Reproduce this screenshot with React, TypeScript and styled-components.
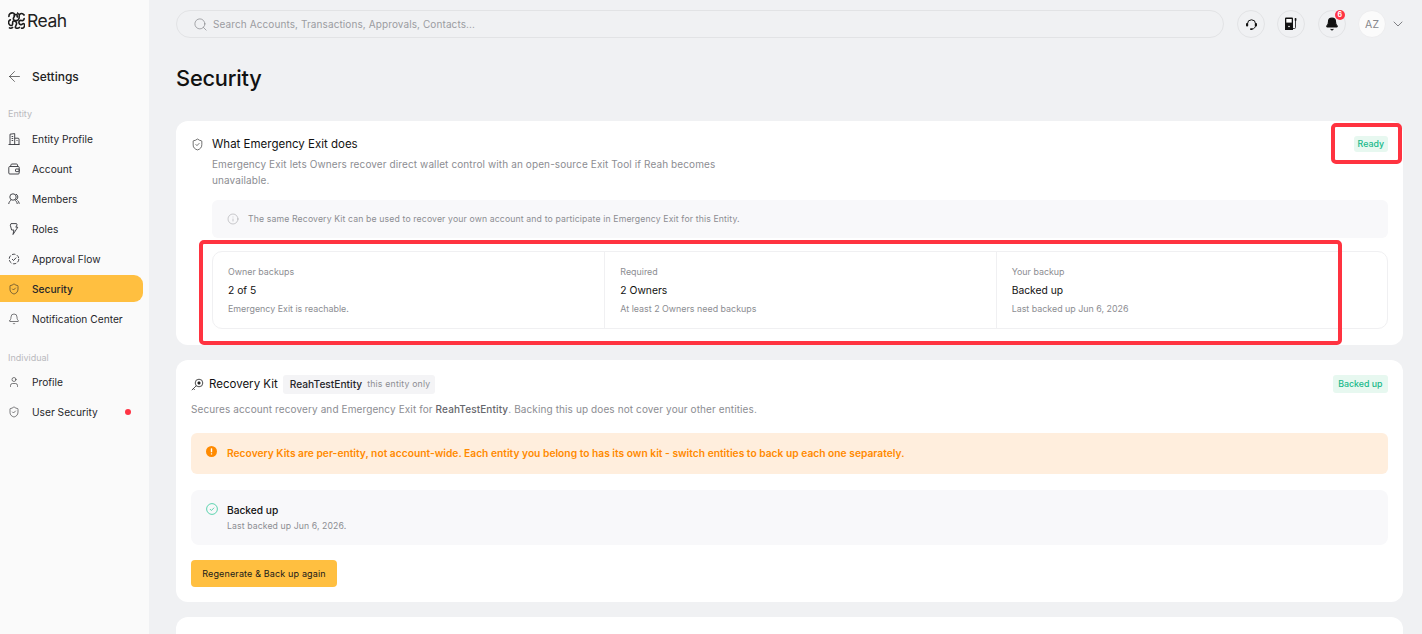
import styled, { createGlobalStyle } from 'styled-components';
import { ArrowLeft, Bell, ChevronDown, Info, Search, ShieldCheck, User } from 'lucide-react';

const GlobalStyle = createGlobalStyle`
  html, body {
    margin: 0;
    padding: 0;
    height: 634px;
    overflow: hidden;
    background: #f0f1f3;
    font-family: Inter, "Liberation Sans", sans-serif;
    color: #111;
  }
  * { box-sizing: border-box; }
`

const Page = styled.div`
  position: relative;
  display: flex;
  width: 1422px;
  height: 634px;
  overflow: hidden;
`

const Sidebar = styled.aside`
  flex: 0 0 149px;
  background: #fafafa;
  display: flex;
  flex-direction: column;
  padding-right: 6px;
`

const Logo = styled.div`
  display: flex;
  align-items: center;
  gap: 2px;
  height: 40px;
  padding-left: 8px;
  font-size: 17.5px;
  letter-spacing: -0.5px;
  color: #222;
`

const BackRow = styled.div`
  display: flex;
  align-items: center;
  gap: 9px;
  margin-top: 15px;
  height: 42px;
  padding-left: 6px;
  font-size: 12px;
  font-weight: 500;
  color: #222;
`

const SectionLabel = styled.div<{ $gap: number }>`
  margin-top: ${props => props.$gap}px;
  height: 14px;
  line-height: 14px;
  padding-left: 8px;
  font-size: 9px;
  color: #b9b9bd;
`

const NavList = styled.nav<{ $top: number }>`
  display: flex;
  flex-direction: column;
  margin-top: ${props => props.$top}px;
`

const NavItem = styled.div<{ $active?: boolean }>`
  display: flex;
  align-items: center;
  gap: 12px;
  height: 27px;
  margin-bottom: 3px;
  padding: 0 12px 0 8px;
  border-radius: ${props => props.$active ? '0 9px 9px 0' : '0'};
  background: ${props => props.$active ? '#ffbf40' : 'transparent'};
  font-size: 10.2px;
  font-weight: ${props => props.$active ? 500 : 400};
  color: #26262a;
  white-space: nowrap;

  svg {
    flex: 0 0 12px;
  }
`

const RedDot = styled.span`
  width: 6px;
  height: 6px;
  margin-left: auto;
  border-radius: 50%;
  background: #ff3344;
`

const Main = styled.main`
  flex: 1;
  display: flex;
  flex-direction: column;
  padding: 10px 19px 0 27px;
  min-width: 0;
`

const TopBar = styled.header`
  display: flex;
  align-items: center;
  height: 28px;
`

const SearchBar = styled.div`
  flex: 0 0 1048px;
  height: 28px;
  display: flex;
  align-items: center;
  gap: 5px;
  padding-left: 16px;
  border: 1px solid #e2e3e5;
  border-radius: 14px;
  font-size: 10px;
  letter-spacing: 0.1px;
  color: #9b9ca1;
`

const TopActions = styled.div`
  display: flex;
  align-items: center;
  gap: 12.4px;
  margin-left: 13px;
`

const RoundButton = styled.div`
  position: relative;
  width: 28px;
  height: 28px;
  display: flex;
  align-items: center;
  justify-content: center;
  border: 1px solid #e2e3e5;
  border-radius: 50%;
`

const Counter = styled.span`
  position: absolute;
  top: -1px;
  right: 0;
  width: 10px;
  height: 10px;
  border-radius: 50%;
  background: #ff3344;
  color: #fff;
  font-size: 7px;
  font-weight: 700;
  line-height: 10px;
  text-align: center;
`

const Avatar = styled.div`
  width: 28px;
  height: 28px;
  display: flex;
  align-items: center;
  justify-content: center;
  border-radius: 50%;
  background: #fbfbfb;
  border: 1px solid #ededef;
  font-size: 10.5px;
  letter-spacing: 0.3px;
  color: #85868b;
`

const AccountMenu = styled.div`
  display: flex;
  align-items: center;
  gap: 4px;
  color: #55565a;
`

const Title = styled.h1`
  margin: 25px 0 28px;
  height: 30px;
  line-height: 30px;
  font-size: 21.8px;
  font-weight: 500;
  letter-spacing: -0.2px;
  color: #111;
`

const Cards = styled.div`
  display: flex;
  flex-direction: column;
  gap: 15px;
`

const Card = styled.section<{ $height: number; $top: number }>`
  height: ${props => props.$height}px;
  flex: 0 0 ${props => props.$height}px;
  padding: ${props => props.$top}px 15px 0;
  background: #fff;
  border-radius: 12px;
`

const CardHead = styled.div<{ $gap: number }>`
  display: flex;
  align-items: center;
  gap: ${props => props.$gap}px;
  height: 18px;
`

const CardTitle = styled.h2`
  margin: 0;
  font-size: 11.5px;
  font-weight: 400;
  color: #111;
  white-space: nowrap;
`

const StatusBadge = styled.span<{ $tall?: boolean }>`
  margin-left: auto;
  height: ${props => props.$tall ? 18 : 16}px;
  line-height: ${props => props.$tall ? 18 : 16}px;
  padding: 0 ${props => props.$tall ? 5.5 : 4}px;
  border-radius: 3px;
  background: #e7f8f0;
  color: #16b88a;
  font-size: 8.8px;
  font-weight: 500;
`

const ExitDescription = styled.p`
  width: 530px;
  margin: 3px 0 0 21px;
  font-size: 10px;
  line-height: 16px;
  letter-spacing: 0.11px;
  color: #8c8d92;
`

const Note = styled.div`
  display: flex;
  align-items: center;
  gap: 9px;
  height: 38px;
  margin: 12px 0 0 21px;
  padding-left: 15px;
  border-radius: 6px;
  background: #f8f8fa;
  font-size: 8.7px;
  letter-spacing: 0.13px;
  color: #8c8d92;
`

const StatGrid = styled.div`
  display: grid;
  grid-template-columns: repeat(3, 1fr);
  height: 78px;
  margin: 13px 0 0 21px;
  border: 1px solid #f0f0f2;
  border-radius: 10px;
`

const StatCell = styled.div`
  padding: 14px 15px 0;
  & + & {
    border-left: 1px solid #f0f0f2;
  }
`

const StatLabel = styled.div`
  font-size: 8.9px;
  line-height: 12px;
  color: #8c8d92;
`

const StatValue = styled.div`
  margin-top: 5px;
  font-size: 10.3px;
  line-height: 14px;
  color: #111;
`

const StatHint = styled.div`
  margin-top: 6px;
  font-size: 8.9px;
  line-height: 12px;
  color: #8c8d92;
`

const EntityTag = styled.span`
  display: inline-flex;
  align-items: center;
  gap: 5px;
  height: 19px;
  padding: 0 5px 0 7px;
  border-radius: 3px;
  background: #f4f4f6;
  font-size: 10.2px;
  font-weight: 500;
  color: #26262a;
`

const EntityScope = styled.span`
  font-size: 8.7px;
  font-weight: 400;
  letter-spacing: 0.2px;
  color: #8c8d92;
`

const KitDescription = styled.p`
  margin: 8px 0 0;
  font-size: 10px;
  line-height: 16px;
  letter-spacing: 0.11px;
  color: #8c8d92;

  b {
    font-weight: 500;
    color: #66676c;
  }
`

const Warning = styled.div`
  display: flex;
  gap: 10px;
  height: 41px;
  margin-top: 16px;
  padding: 12px 15px 0;
  border-radius: 6px;
  background: #ffeedd;
  font-size: 10.25px;
  font-weight: 600;
  line-height: 16px;
  color: #ff8a00;
`

const BackupPanel = styled.div`
  display: flex;
  gap: 9px;
  height: 55px;
  margin-top: 16px;
  padding: 13px 15px 0;
  border-radius: 8px;
  background: #f8f8fa;
`

const BackupTitle = styled.div`
  font-size: 10.2px;
  font-weight: 500;
  line-height: 14px;
  color: #111;
`

const BackupHint = styled.div`
  margin-top: 3px;
  font-size: 8.7px;
  line-height: 12px;
  letter-spacing: 0.1px;
  color: #8c8d92;
`

const PrimaryButton = styled.button`
  display: block;
  width: 146px;
  height: 27px;
  margin-top: 15px;
  padding: 0;
  border: 0;
  border-radius: 4px;
  background: #ffbf40;
  font-family: inherit;
  font-size: 9px;
  font-weight: 400;
  letter-spacing: 0.15px;
  color: #1a1a1a;
`

const Highlight = styled.div<{ $left: number; $top: number; $width: number; $height: number }>`
  position: absolute;
  left: ${props => props.$left}px;
  top: ${props => props.$top}px;
  width: ${props => props.$width}px;
  height: ${props => props.$height}px;
  border: 4px solid #ff3340;
  border-radius: 5px;
  pointer-events: none;
`

const LogoMark = () => (
  <svg width="17" height="17" viewBox="0 0 17 17" fill="none" stroke="#1c1c1c" strokeWidth="1.600">
    <path d="M1 5c-.5-3 2-4.500 4-4s2 2.500 1 4-1 3 1 3.500 3.500-.5 4-2-.5-3.500 1-4.500 3.500 0 4.500 1.500" />
    <path d="M3 8c-2-.5-3 2-2 4s3 2 3.500 .5-.5-3 1-3.500 3.500 1 3 3-2 3.500-.5 4 3 0 4-1" />
    <path d="M16 6c.5 2-1 3-2.500 2.500s-3 .5-2.500 2.500 2.500 2 3.500 1 2.500 0 2 2-2 2.500-3.500 2" />
    <path d="M5.500 3.500c1.500-1 3-1.500 3.500-.5s-.5 2 1 2M1 15.500c1 1 3 1 4-.5M9 .8c1 .5 1.500 1 1.500 2" />
  </svg>
)

const BuildingIcon = () => (
  <svg width="12" height="12" viewBox="0 0 12 12" fill="none" stroke="#33343a" strokeWidth="0.9">
    <path d="M.5 11.500h11M2 11.500V1.200L6.700.6v10.900M6.700 5.200h3.300a1 1 0 0 1 1 1v5.300M3.600 3.500h1.600M3.600 5.500h1.600M3.600 7.500h1.600M8.500 7.500h1" />
  </svg>
)

const WalletIcon = () => (
  <svg width="12" height="12" viewBox="0 0 12 12" fill="none" stroke="#33343a" strokeWidth="0.9">
    <rect x="0.8" y="3.500" width="10.400" height="7.500" rx="1" />
    <path d="M2.500 3.500l.5-1.700a1 1 0 0 1 1-.8h4.500a1 1 0 0 1 1 .8l.2 1.700" />
    <rect x="7.500" y="6" width="3.700" height="2.600" rx="0.600" />
  </svg>
)

const MembersIcon = () => (
  <svg width="12" height="12" viewBox="0 0 12 12" fill="none" stroke="#33343a" strokeWidth="0.9">
    <circle cx="5" cy="4" r="3.200" />
    <path d="M8 1.100a3.200 3.200 0 0 1 0 5.800M.7 11c.3-2 1.400-3.400 2.600-4M6.700 7c1.200.6 2.300 2 2.600 4M9.500 7.400c.9.700 1.500 1.900 1.800 3.400" />
  </svg>
)

const RolesIcon = () => (
  <svg width="12" height="12" viewBox="0 0 12 12" fill="none" stroke="#33343a" strokeWidth="0.9" strokeLinejoin="round">
    <path d="M3 .6h5.500l.6 1.300-1.300 2.300h2L5 11.500l.9-4.500H3.600L2.300 2.200z" />
  </svg>
)

const ApprovalIcon = () => (
  <svg width="12" height="12" viewBox="0 0 12 12" fill="none" stroke="#33343a" strokeWidth="0.9">
    <circle cx="6" cy="6" r="4.800" strokeDasharray="3.500 1.500" />
    <path d="M4 6l1.500 1.500L8.200 4.600" />
  </svg>
)

const HeadsetIcon = () => (
  <svg width="13" height="13" viewBox="0 0 13 13" fill="none" stroke="#111" strokeWidth="1">
    <path d="M2.500 5.800a4 4 0 0 1 8 0v1.500a3.500 3.500 0 0 1-3.500 3.700" />
    <rect x="1" y="5" width="2.200" height="3.400" rx="1" fill="#111" strokeWidth="0" />
    <rect x="9.800" y="5" width="2.200" height="3.400" rx="1" fill="#111" strokeWidth="0" />
    <rect x="5" y="10.200" width="2.600" height="1.800" rx="0.900" fill="#111" strokeWidth="0" />
  </svg>
)

const FuelIcon = () => (
  <svg width="14" height="14" viewBox="0 0 14 14" fill="none">
    <path d="M1 1.500A1 1 0 0 1 2 .5h6a1 1 0 0 1 1 1V13H1z" fill="#111" />
    <rect x="2.300" y="2" width="5.400" height="3.600" fill="#fff" />
    <circle cx="5" cy="9.500" r="0.800" fill="#fff" />
    <path d="M9 11.500h1.500a1 1 0 0 0 1-1V4" stroke="#111" strokeWidth="0.800" />
    <rect x="10.700" y="1" width="1.700" height="3" rx="0.700" fill="#111" />
  </svg>
)

const KeyIcon = () => (
  <svg width="13" height="13" viewBox="0 0 13 13" fill="none" stroke="#222" strokeWidth="0.800">
    <circle cx="8" cy="5" r="3.800" />
    <circle cx="8" cy="5" r="1.200" fill="#222" />
    <path d="M5.200 7.800L.8 12.200M2.400 10.600l1.300 1.300" />
  </svg>
)

const WarningIcon = () => (
  <svg width="11" height="11" viewBox="0 0 11 11" style={{ marginTop: 1 }}>
    <circle cx="5.500" cy="5.500" r="5.500" fill="#ff8a00" />
    <rect x="4.800" y="2.300" width="1.400" height="4" rx="0.500" fill="#fff" />
    <rect x="4.800" y="7.200" width="1.400" height="1.400" rx="0.500" fill="#fff" />
  </svg>
)

const CheckCircleIcon = () => (
  <svg width="12" height="12" viewBox="0 0 12 12" fill="none" stroke="#4ccfa6">
    <circle cx="6" cy="6" r="5.400" strokeWidth="0.900" />
    <path d="M3.900 6l1.500 1.500L8.100 4.700" strokeWidth="0.900" />
  </svg>
)

const entityNav = [
  { label: 'Entity Profile', icon: <BuildingIcon /> },
  { label: 'Account', icon: <WalletIcon /> },
  { label: 'Members', icon: <MembersIcon /> },
  { label: 'Roles', icon: <RolesIcon /> },
  { label: 'Approval Flow', icon: <ApprovalIcon /> },
  { label: 'Security', icon: <ShieldCheck size={12} strokeWidth={1.2} />, active: true },
  { label: 'Notification Center', icon: <Bell size={12} strokeWidth={1.2} /> },
]

const stats = [
  { label: 'Owner backups', value: '2 of 5', hint: 'Emergency Exit is reachable.' },
  { label: 'Required', value: '2 Owners', hint: 'At least 2 Owners need backups' },
  { label: 'Your backup', value: 'Backed up', hint: 'Last backed up Jun 6, 2026' },
]

const App = () => {
  return (
    <Page>
      <GlobalStyle />
      <Sidebar>
        <Logo><LogoMark />Reah</Logo>
        <BackRow><ArrowLeft size={17} strokeWidth={0.9} />Settings</BackRow>
        <SectionLabel $gap={10}>Entity</SectionLabel>
        <NavList $top={4}>
          {entityNav.map(item => (
            <NavItem key={item.label} $active={item.active}>{item.icon}{item.label}</NavItem>
          ))}
        </NavList>
        <SectionLabel $gap={16}>Individual</SectionLabel>
        <NavList $top={3}>
          <NavItem><User size={12} strokeWidth={1.2} />Profile</NavItem>
          <NavItem><ShieldCheck size={12} strokeWidth={1.2} />User Security<RedDot /></NavItem>
        </NavList>
      </Sidebar>

      <Main>
        <TopBar>
          <SearchBar>
            <Search size={15} strokeWidth={1} color="#77787d" />
            Search Accounts, Transactions, Approvals, Contacts...
          </SearchBar>
          <TopActions>
            <RoundButton><HeadsetIcon /></RoundButton>
            <RoundButton><FuelIcon /></RoundButton>
            <RoundButton>
              <Bell size={14} fill="#111" color="#111" />
              <Counter>6</Counter>
            </RoundButton>
            <AccountMenu>
              <Avatar>AZ</Avatar>
              <ChevronDown size={16} strokeWidth={1.1} />
            </AccountMenu>
          </TopActions>
        </TopBar>

        <Title>Security</Title>

        <Cards>
          <Card $height={224} $top={14}>
            <CardHead $gap={8}>
              <ShieldCheck size={13} strokeWidth={1.1} />
              <CardTitle>What Emergency Exit does</CardTitle>
              <StatusBadge>Ready</StatusBadge>
            </CardHead>
            <ExitDescription>
              Emergency Exit lets Owners recover direct wallet control with an open-source Exit Tool if Reah becomes unavailable.
            </ExitDescription>
            <Note>
              <Info size={12} strokeWidth={0.9} />
              The same Recovery Kit can be used to recover your own account and to participate in Emergency Exit for this Entity.
            </Note>
            <StatGrid>
              {stats.map(stat => (
                <StatCell key={stat.label}>
                  <StatLabel>{stat.label}</StatLabel>
                  <StatValue>{stat.value}</StatValue>
                  <StatHint>{stat.hint}</StatHint>
                </StatCell>
              ))}
            </StatGrid>
          </Card>

          <Card $height={242} $top={15}>
            <CardHead $gap={5}>
              <KeyIcon />
              <CardTitle>Recovery Kit</CardTitle>
              <EntityTag>ReahTestEntity<EntityScope>this entity only</EntityScope></EntityTag>
              <StatusBadge $tall>Backed up</StatusBadge>
            </CardHead>
            <KitDescription>
              Secures account recovery and Emergency Exit for <b>ReahTestEntity</b>. Backing this up does not cover your other entities.
            </KitDescription>
            <Warning>
              <WarningIcon />
              Recovery Kits are per-entity, not account-wide. Each entity you belong to has its own kit - switch entities to back up each one separately.
            </Warning>
            <BackupPanel>
              <CheckCircleIcon />
              <div>
                <BackupTitle>Backed up</BackupTitle>
                <BackupHint>Last backed up Jun 6, 2026.</BackupHint>
              </div>
            </BackupPanel>
            <PrimaryButton>Regenerate &amp; Back up again</PrimaryButton>
          </Card>

          <Card $height={60} $top={15} />
        </Cards>
      </Main>

      <Highlight $left={1331} $top={123} $width={71} $height={41} />
      <Highlight $left={199} $top={240} $width={1143} $height={105} />
    </Page>
  )
}

export default App;
